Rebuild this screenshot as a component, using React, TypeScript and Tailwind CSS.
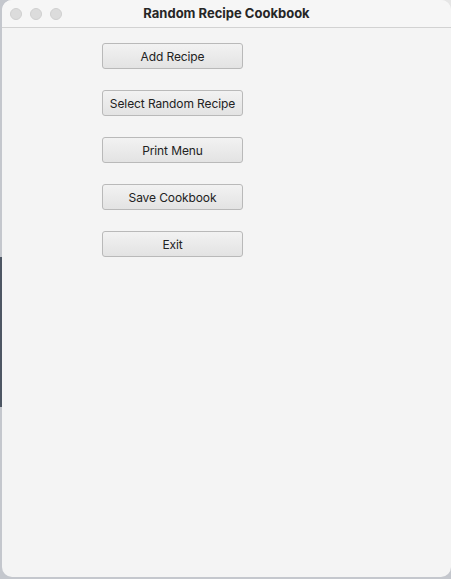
import React from "react";

const BOTONES = ["Add Recipe", "Select Random Recipe", "Print Menu", "Save Cookbook", "Exit"];

export default function App() {
  return (
    <div className="relative h-[579px] w-[451px] overflow-hidden bg-[#c4c7cd]" style={{ fontFamily: "Inter, 'Noto Sans', sans-serif" }}>
      {/* fondo detrás de la ventana */}
      <div className="absolute left-0 top-[257px] h-[150px] w-[3px] bg-[#4d5663]" />
      <div className="absolute right-0 top-0 h-[20px] w-[20px] bg-[#e6e6e6]" />

      <div className="relative ml-[2px] flex h-[577px] flex-col overflow-hidden rounded-[10px] bg-[#f4f4f4]">
        <div className="relative flex h-[28px] items-center border-b border-[#d2d2d2] bg-[#f6f6f6]">
          <div className="absolute left-[8px] flex gap-[8px]">
            <span className="h-[12px] w-[12px] rounded-full border border-[#cfcfcf] bg-[#dcdcdc]" />
            <span className="h-[12px] w-[12px] rounded-full border border-[#cfcfcf] bg-[#dcdcdc]" />
            <span className="h-[12px] w-[12px] rounded-full border border-[#cfcfcf] bg-[#dcdcdc]" />
          </div>
          <div className="w-full text-center text-[13px] font-bold text-[#262626]">Random Recipe Cookbook</div>
        </div>

        <div className="flex flex-col gap-[21px] pl-[100px] pt-[15px]">
          {BOTONES.map((b) => (
            <button
              key={b}
              type="button"
              className="h-[26px] w-[141px] rounded-[3px] border border-[#b9b9b9] bg-gradient-to-b from-[#f2f2f2] to-[#e3e3e3] pt-[2px] text-[12px] tracking-[-0.1px] text-[#222]"
            >
              {b}
            </button>
          ))}
        </div>
      </div>
    </div>
  );
}
